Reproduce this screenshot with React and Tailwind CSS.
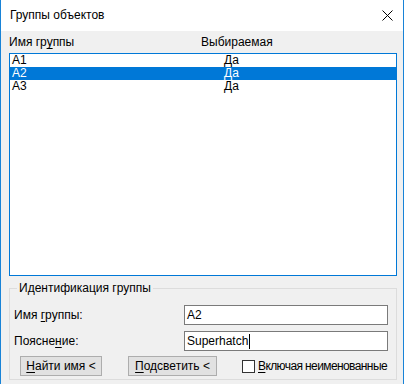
import React from "react";

const rows = [
  { name: "A1", sel: "Да" },
  { name: "A2", sel: "Да", active: true },
  { name: "A3", sel: "Да" },
];

function Mn({ children }) {
  return <span className="underline underline-offset-[2px]">{children}</span>;
}

export default function App() {
  return (
    <div
      className="w-[404px] h-[384px] flex flex-col bg-[#f0f0f0] border-x border-[#1883d7] text-[12px] leading-[15px] text-black overflow-hidden"
      style={{ fontFamily: '"Liberation Sans", Arial, sans-serif' }}
    >
      {/* title bar */}
      <div className="h-[31px] bg-white flex items-center justify-between pl-[9px] pr-[10px]">
        <span className="text-[12px]">Группы объектов</span>
        <svg width="11" height="11" viewBox="0 0 11 11">
          <path d="M0.5 0.5 L10.5 10.5 M10.5 0.5 L0.5 10.5" stroke="#000" strokeWidth="1" />
        </svg>
      </div>

      {/* column headers */}
      <div className="h-[22px] flex items-start pt-[4px] pl-[8px]">
        <span className="w-[192px]">
          Имя гр<Mn>у</Mn>ппы
        </span>
        <span>Выбираемая</span>
      </div>

      {/* list */}
      <div className="ml-[8px] w-[388px] h-[223px] border border-[#0078d7] bg-white">
        {rows.map((r) => (
          <div
            key={r.name}
            className={
              "h-[13px] flex items-center leading-[13px] " +
              (r.active ? "bg-[#0078d7] text-white" : "")
            }
          >
            <span className="w-[214px] pl-[2px]">{r.name}</span>
            <span>{r.sel}</span>
          </div>
        ))}
      </div>

      {/* group box */}
      <div className="relative ml-[8px] mt-[12px] w-[388px] h-[92px] border border-[#dcdcdc] px-[4px] pt-[16px]">
        <span className="absolute -top-[8px] left-[7px] bg-[#f0f0f0] px-[2px]">
          Идентификация группы
        </span>

        <div className="flex items-center h-[20px]">
          <span className="w-[170px]">
            Имя <Mn>г</Mn>руппы:
          </span>
          <div className="w-[204px] h-[20px] border border-[#7a7a7a] bg-white flex items-center pl-[2px]">
            A2
          </div>
        </div>

        <div className="flex items-center h-[20px] mt-[6px]">
          <span className="w-[170px]">
            Поясне<Mn>н</Mn>ие:
          </span>
          <div className="w-[204px] h-[20px] border border-[#7a7a7a] bg-white flex items-center pl-[2px]">
            Superhatch
            <span className="inline-block w-[1px] h-[15px] bg-black ml-[1px]" />
          </div>
        </div>

        <div className="flex items-center mt-[5px] pl-[6px]">
          <button className="shrink-0 w-[82px] h-[20px] bg-[#e1e1e1] border border-[#adadad] text-[12px] leading-[15px] whitespace-nowrap">
            <Mn>Н</Mn>айти имя &lt;
          </button>
          <button className="shrink-0 ml-[26px] w-[89px] h-[20px] bg-[#e1e1e1] border border-[#adadad] text-[12px] leading-[15px] whitespace-nowrap">
            <Mn>П</Mn>одсветить &lt;
          </button>
          <div className="ml-[25px] flex items-center whitespace-nowrap">
            <span className="shrink-0 w-[13px] h-[13px] border border-[#333] bg-white" />
            <span className="ml-[3px] tracking-[-0.6px]">
              <Mn>В</Mn>ключая неименованные
            </span>
          </div>
        </div>
      </div>
    </div>
  );
}
